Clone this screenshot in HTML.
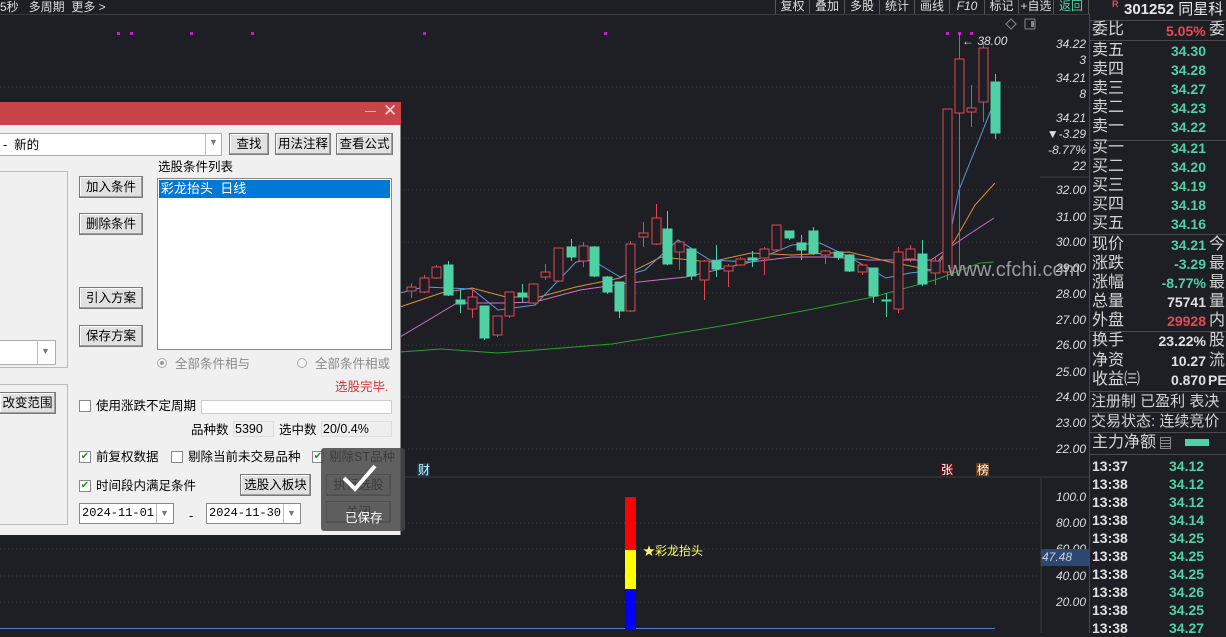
<!DOCTYPE html>
<html><head><meta charset="utf-8">
<style>
*{margin:0;padding:0;box-sizing:border-box}
body{width:1226px;height:633px;overflow:hidden;background:#1e1f24;font-family:"Liberation Sans","Noto Sans CJK SC",sans-serif;position:relative;color:#ccc}
.a{position:absolute;white-space:nowrap}
.tb{position:absolute;top:0;height:14px;font-size:12px;line-height:12px;color:#ddd;border-right:1px solid #555;text-align:center}
.rl{position:absolute;left:1092px;font-size:16px;line-height:18px;color:#d4d4d4;white-space:nowrap}
.rv{position:absolute;right:16px;font-size:14px;font-weight:bold;line-height:18px;text-align:right;white-space:nowrap}
.g{color:#4fd1a5}.r{color:#e84a55}.w{color:#e0e0e0}
.sep{position:absolute;left:1090px;width:136px;height:1px;background:#4a4a4a}
.ax{position:absolute;font-size:12px;font-style:italic;color:#ddd;text-align:right;width:46px;left:1040px}
.dlg{position:absolute;left:0;top:102px;width:401px;height:433px;background:#f0f0f0;border-right:1px solid #888;font-size:12px;color:#000}
.btn{position:absolute;background:#e1e1e1;border:1px solid #7a7a7a;box-shadow:inset -1px -1px 0 #a0a0a0,inset 1px 1px 0 #fff;text-align:center;font-size:12.5px;line-height:20px}
.box{position:absolute;border:1px solid #adadad;background:#fff}
.cb{position:absolute;width:12px;height:12px;border:1px solid #888;background:#fff;font-size:10px;line-height:10px;color:#2a8a2a;text-align:center}
.lab{position:absolute;font-size:12.5px;line-height:14px;white-space:nowrap}
</style></head><body>

<!-- top bar -->
<div class="a" style="left:0;top:-2px;font-size:12px;color:#ddd">5秒&nbsp;&nbsp;&nbsp;多周期&nbsp;&nbsp;更多 &gt;</div>
<div class="a" style="left:0;top:14px;width:1090px;height:1px;background:#3c3c3c"></div>
<div class="a" style="left:775px;top:0;width:1px;height:14px;background:#555"></div>
<div class="tb" style="left:776px;width:34px">复权</div>
<div class="tb" style="left:810px;width:35px">叠加</div>
<div class="tb" style="left:845px;width:35px">多股</div>
<div class="tb" style="left:880px;width:35px">统计</div>
<div class="tb" style="left:915px;width:35px">画线</div>
<div class="tb" style="left:950px;width:35px;font-style:italic">F10</div>
<div class="tb" style="left:985px;width:34px">标记</div>
<div class="tb" style="left:1019px;width:35px">+自选</div>
<div class="tb" style="left:1054px;width:35px;color:#4fd1a5">返回</div>

<svg class="a" style="left:0;top:0" width="1090" height="633">
<g stroke="#3a3c42" stroke-dasharray="1,3">
<line x1="0" y1="87" x2="1040" y2="87"/><line x1="0" y1="138" x2="1040" y2="138"/>
<line x1="0" y1="190" x2="1040" y2="190"/><line x1="0" y1="242" x2="1040" y2="242"/>
<line x1="0" y1="293" x2="1040" y2="293"/><line x1="0" y1="345" x2="1040" y2="345"/>
<line x1="0" y1="397" x2="1040" y2="397"/><line x1="0" y1="449" x2="1040" y2="449"/>
<line x1="0" y1="523" x2="1040" y2="523"/><line x1="0" y1="549" x2="1040" y2="549"/>
<line x1="0" y1="576" x2="1040" y2="576"/><line x1="0" y1="602" x2="1040" y2="602"/>
</g>
<line x1="0" y1="477" x2="1090" y2="477" stroke="#3a3c42"/>
<line x1="1041" y1="478" x2="1041" y2="633" stroke="#3a3c42"/>
<line x1="1040" y1="177" x2="1090" y2="177" stroke="#3a3c42"/>
<line x1="1089.5" y1="14" x2="1089.5" y2="633" stroke="#4a4a4a"/>
<g fill="#c020c0">
<rect x="117" y="32" width="3" height="3"/><rect x="130" y="32" width="3" height="3"/><rect x="190" y="32" width="3" height="3"/><rect x="251" y="32" width="3" height="3"/><rect x="423" y="32" width="3" height="3"/><rect x="604" y="32" width="3" height="3"/><rect x="946" y="32" width="3" height="3"/><rect x="958" y="32" width="3" height="3"/><rect x="970" y="32" width="3" height="3"/>
</g>
<path d="M1011 19 l5 5 -5 5 -5 -5z" fill="none" stroke="#888"/>
<rect x="1025" y="19" width="10" height="10" fill="none" stroke="#888" rx="1"/><rect x="1031" y="21" width="3" height="6" fill="#888"/>
<text x="962" y="45" fill="#ddd" font-size="12" font-style="italic" font-family="Liberation Sans">← 38.00</text>
<g fill="none" stroke-width="1">
<polyline stroke="#2aa02a" points="400,352 441,349 498,353 612,344 727,325 808,310 873,297 935,280 980,263 994,262"/>
<polyline stroke="#d070d0" points="400,337 457,303 506,303 535,302 580,290 629,283 686,277 751,262 792,257 829,257 869,260 931,260 971,233 994,218"/>
<polyline stroke="#e09030" points="400,307 441,293 472,288 506,297 539,297 576,287 620,278 661,257 710,262 751,253 792,255 849,252 890,262 931,270 955,240 975,205 995,183"/>
<polyline stroke="#5a9ae0" points="400,293 424,287 472,289 498,310 535,305 576,262 592,260 620,277 645,270 678,240 710,260 751,262 792,245 820,243 849,257 886,278 910,273 935,270 947,250 959,190 971,160 983,130 995,100"/>
</g>
<g id="c"></g>
<rect x="417" y="463" width="13" height="13" fill="#173a5e"/><text x="418" y="474" fill="#cfe" font-size="12">财</text>
<rect x="940" y="463" width="13" height="13" fill="#5a1010"/><text x="941" y="474" fill="#fff" font-size="12">张</text>
<rect x="976" y="463" width="13" height="13" fill="#6b3a12"/><text x="977" y="474" fill="#fff" font-size="12">榜</text>
<line x1="0" y1="628.5" x2="995" y2="628.5" stroke="#5a7ad0"/>
<rect x="625" y="497" width="11" height="53" fill="#f00"/>
<rect x="625" y="550" width="11" height="39" fill="#ff0"/>
<rect x="625" y="590" width="11" height="39" fill="#00f"/>
<text x="643" y="555" fill="#ffff60" font-size="12">★彩龙抬头</text>
<text x="948" y="276" fill="#9a9a9a" font-size="20" font-family="Liberation Sans">www.cfchi.com</text>
</svg>

<div class="ax" style="top:37px">34.22</div>
<div class="ax" style="top:53px">3</div>
<div class="ax" style="top:71px">34.21</div>
<div class="ax" style="top:87px">8</div>
<div class="ax g" style="top:111px">34.21</div>
<div class="ax g" style="top:127px;left:1034px;width:52px">▼-3.29</div>
<div class="ax g" style="top:143px">-8.77%</div>
<div class="ax g" style="top:159px">22</div>
<div class="ax" style="top:183px">32.00</div>
<div class="ax" style="top:210px">31.00</div>
<div class="ax" style="top:235px">30.00</div>
<div class="ax" style="top:261px">29.00</div>
<div class="ax" style="top:287px">28.00</div>
<div class="ax" style="top:313px">27.00</div>
<div class="ax" style="top:338px">26.00</div>
<div class="ax" style="top:365px">25.00</div>
<div class="ax" style="top:390px">24.00</div>
<div class="ax" style="top:416px">23.00</div>
<div class="ax" style="top:442px">22.00</div>
<div class="ax" style="top:490px">100.0</div>
<div class="ax" style="top:516px">80.00</div>
<div class="ax" style="top:542px">60.00</div>
<div class="ax" style="top:569px">40.00</div>
<div class="ax" style="top:595px">20.00</div>
<div class="a" style="left:1041px;top:549px;width:48px;height:17px;background:#2c4870;font-size:12px;font-style:italic;color:#ccd;line-height:17px;padding-left:1px">47.48</div>

<!-- right panel -->
<div class="a" style="left:1112px;top:-1px;font-size:9px;color:#e84a55;font-weight:bold">R</div>
<div class="a" style="left:1124px;top:-2px;font-size:15px;color:#e8e8e8;font-weight:bold">301252 <span style="font-weight:normal">同星科</span></div>
<div class="sep" style="top:20px"></div>
<div class="rl" style="top:21px">委比</div><div class="a r" style="left:1166px;top:22px;font-size:14px;font-weight:bold;line-height:18px">5.05%</div><div class="rl" style="left:1209px;top:21px">委</div>
<div class="sep" style="top:40px"></div>
<div class="rl" style="top:42px">卖五</div><div class="rv g" style="top:42px;right:20px">34.30</div>
<div class="rl" style="top:61px">卖四</div><div class="rv g" style="top:61px;right:20px">34.28</div>
<div class="rl" style="top:80px">卖三</div><div class="rv g" style="top:80px;right:20px">34.27</div>
<div class="rl" style="top:99px">卖二</div><div class="rv g" style="top:99px;right:20px">34.23</div>
<div class="rl" style="top:118px">卖一</div><div class="rv g" style="top:118px;right:20px">34.22</div>
<div class="sep" style="top:140px"></div>
<div class="rl" style="top:139px">买一</div><div class="rv g" style="top:139px;right:20px">34.21</div>
<div class="rl" style="top:158px">买二</div><div class="rv g" style="top:158px;right:20px">34.20</div>
<div class="rl" style="top:177px">买三</div><div class="rv g" style="top:177px;right:20px">34.19</div>
<div class="rl" style="top:196px">买四</div><div class="rv g" style="top:196px;right:20px">34.18</div>
<div class="rl" style="top:215px">买五</div><div class="rv g" style="top:215px;right:20px">34.16</div>
<div class="sep" style="top:234px"></div>
<div class="rl" style="top:236px">现价</div><div class="rv g" style="top:236px;right:20px">34.21</div><div class="rl" style="left:1209px;top:236px">今</div>
<div class="rl" style="top:255px">涨跌</div><div class="rv g" style="top:255px;right:20px">-3.29</div><div class="rl" style="left:1209px;top:255px">最</div>
<div class="rl" style="top:274px">涨幅</div><div class="rv g" style="top:274px;right:20px">-8.77%</div><div class="rl" style="left:1209px;top:274px">最</div>
<div class="rl" style="top:293px">总量</div><div class="rv w" style="top:293px;right:20px">75741</div><div class="rl" style="left:1209px;top:293px">量</div>
<div class="rl" style="top:312px">外盘</div><div class="rv r" style="top:312px;right:20px">29928</div><div class="rl" style="left:1209px;top:312px">内</div>
<div class="sep" style="top:331px"></div>
<div class="rl" style="top:332px">换手</div><div class="rv w" style="top:332px;right:20px">23.22%</div><div class="rl" style="left:1209px;top:332px">股</div>
<div class="rl" style="top:352px">净资</div><div class="rv w" style="top:352px;right:20px">10.27</div><div class="rl" style="left:1209px;top:352px">流</div>
<div class="rl" style="top:371px">收益㈢</div><div class="rv w" style="top:371px;right:20px">0.870</div><div class="a w" style="left:1208px;top:371px;font-size:14px;font-weight:bold;line-height:18px">PE</div>
<div class="sep" style="top:391px"></div>
<div class="rl" style="top:393px;left:1091px;font-size:15px">注册制 已盈利 表决</div>
<div class="sep" style="top:412px"></div>
<div class="rl" style="top:413px;left:1091px;font-size:15px">交易状态: 连续竞价</div>
<div class="sep" style="top:432px"></div>
<div class="rl" style="top:434px">主力净额</div>
<div class="a" style="left:1160px;top:437px;width:11px;height:12px;border:1px solid #888;background:repeating-linear-gradient(#1e1f24 0 2px,#888 2px 3px)"></div>
<div class="a" style="left:1185px;top:439px;width:24px;height:7px;background:#4fd1a5"></div>
<div class="sep" style="top:454px"></div>
<div id="ticks"></div>

<!-- dialog -->
<div class="a" style="left:0;top:102px;width:401px;height:23px;background:#c8444b"></div>
<div class="a" style="left:365px;top:111px;width:11px;height:1px;background:#f0c0c0"></div>
<div class="a" style="left:383px;top:101px;font-size:17px;color:#f4d0d0">✕</div>
<div class="dlg" style="top:125px;height:410px">
 <div class="box" style="left:-1px;top:8px;width:223px;height:23px"><span class="lab" style="left:3px;top:4px">-&nbsp;&nbsp;新的</span>
  <div class="a" style="left:205px;top:0;width:1px;height:21px;background:#bbb"></div><div class="a" style="left:209px;top:3px;font-size:9px;color:#777">▼</div></div>
 <div class="btn" style="left:229px;top:8px;width:40px;height:22px">查找</div>
 <div class="btn" style="left:275px;top:8px;width:56px;height:22px">用法注释</div>
 <div class="btn" style="left:336px;top:8px;width:57px;height:22px">查看公式</div>
 <div class="lab" style="left:158px;top:35px">选股条件列表</div>
 <div class="a" style="left:-1px;top:46px;width:69px;height:197px;border:1px solid #bbb"></div>
 <div class="box" style="left:-1px;top:215px;width:57px;height:25px"><div class="a" style="left:37px;top:0;width:1px;height:23px;background:#bbb"></div><div class="a" style="left:41px;top:5px;font-size:9px;color:#777">▼</div></div>
 <div class="btn" style="left:79px;top:51px;width:64px;height:22px">加入条件</div>
 <div class="btn" style="left:79px;top:88px;width:64px;height:22px">删除条件</div>
 <div class="btn" style="left:79px;top:162px;width:64px;height:22px">引入方案</div>
 <div class="btn" style="left:79px;top:200px;width:64px;height:22px">保存方案</div>
 <div class="box" style="left:157px;top:53px;width:235px;height:172px;border-color:#888">
  <div class="a" style="left:1px;top:1px;width:231px;height:18px;background:#0078d7;color:#fff;font-size:13px;line-height:18px;padding-left:2px">彩龙抬头&nbsp;&nbsp;日线</div></div>
 <div class="a" style="left:157px;top:233px;width:10px;height:10px;border:1px solid #aaa;border-radius:50%;background:#f4f4f4"><div class="a" style="left:2px;top:2px;width:4px;height:4px;border-radius:50%;background:#999"></div></div>
 <div class="lab" style="left:175px;top:232px;color:#8a8a8a">全部条件相与</div>
 <div class="a" style="left:297px;top:233px;width:10px;height:10px;border:1px solid #aaa;border-radius:50%;background:#f4f4f4"></div>
 <div class="lab" style="left:315px;top:232px;color:#8a8a8a">全部条件相或</div>
 <div class="lab" style="left:335px;top:255px;color:#e03030">选股完毕.</div>
 <div class="a" style="left:-1px;top:259px;width:69px;height:141px;border:1px solid #bbb"></div>
 <div class="btn" style="left:-1px;top:267px;width:57px;height:22px">改变范围</div>
 <div class="cb" style="left:79px;top:275px"></div><div class="lab" style="left:96px;top:274px">使用涨跌不定周期</div>
 <div class="box" style="left:201px;top:275px;width:191px;height:14px;border-color:#ccc"></div>
 <div class="lab" style="left:191px;top:298px">品种数</div>
 <div class="a" style="left:233px;top:296px;width:41px;height:16px;border:1px solid #ddd;background:#eee;font-size:12.5px;padding-left:1px">5390</div>
 <div class="lab" style="left:279px;top:298px">选中数</div>
 <div class="a" style="left:321px;top:296px;width:71px;height:16px;border:1px solid #ddd;background:#eee;font-size:12.5px;padding-left:1px">20/0.4%</div>
 <div class="cb" style="left:79px;top:326px">✔</div><div class="lab" style="left:96px;top:325px">前复权数据</div>
 <div class="cb" style="left:171px;top:326px"></div><div class="lab" style="left:188px;top:325px">剔除当前未交易品种</div>
 <div class="cb" style="left:312px;top:326px">✔</div><div class="lab" style="left:329px;top:325px">剔除ST品种</div>
 <div class="cb" style="left:79px;top:355px">✔</div><div class="lab" style="left:96px;top:354px">时间段内满足条件</div>
 <div class="btn" style="left:240px;top:349px;width:71px;height:22px">选股入板块</div>
 <div class="btn" style="left:326px;top:349px;width:65px;height:22px">执行选股</div>
 <div class="box" style="left:79px;top:378px;width:95px;height:21px;border-color:#888"><span class="a" style="left:2px;top:2px;font-family:'Liberation Mono',monospace;font-size:12px">2024-11-01</span><div class="a" style="left:76px;top:0;width:1px;height:19px;background:#bbb"></div><div class="a" style="left:80px;top:4px;font-size:9px;color:#777">▼</div></div>
 <div class="lab" style="left:189px;top:384px">-</div>
 <div class="box" style="left:206px;top:378px;width:95px;height:21px;border-color:#888"><span class="a" style="left:2px;top:2px;font-family:'Liberation Mono',monospace;font-size:12px">2024-11-30</span><div class="a" style="left:76px;top:0;width:1px;height:19px;background:#bbb"></div><div class="a" style="left:80px;top:4px;font-size:9px;color:#777">▼</div></div>
 <div class="btn" style="left:326px;top:376px;width:65px;height:22px">关闭</div>
</div>
<div class="a" style="left:321px;top:448px;width:84px;height:83px;background:rgba(70,70,70,0.85);border-radius:3px"></div>
<svg class="a" style="left:340px;top:460px" width="40" height="36"><path d="M4 18 L15 29 L35 6" fill="none" stroke="#fff" stroke-width="4"/></svg>
<div class="a" style="left:345px;top:507px;font-size:12.5px;color:#fff">已保存</div>

<script>
var C=[[411,287,291,283,298,1],[424,278,292,275,293,1],[436,267,278,265,279,1],[448,265,295,261,296,0],[460,300,304,290,313,0],[472,297,309,288,318,1],[484,306,338,306,340,0],[497,316,335,316,337,1],[509,292,316,292,318,1],[522,293,297,284,302,0],[533,284,303,283,304,1],[545,272,277,264,280,1],[558,248,281,248,282,1],[571,247,257,239,261,0],[583,246,261,242,267,1],[594,247,276,246,277,0],[607,277,292,276,294,0],[619,282,311,282,318,0],[630,244,311,241,312,1],[643,233,237,222,247,1],[656,218,244,204,245,1],[667,229,264,211,265,0],[679,242,252,240,270,1],[691,249,276,249,280,0],[704,261,280,260,300,1],[716,261,269,245,277,0],[728,266,271,264,287,1],[740,259,265,257,266,1],[752,258,260,251,267,0],[764,249,258,247,275,1],[776,225,250,225,251,1],[789,231,238,231,240,0],[801,243,250,235,260,0],[813,231,253,227,255,0],[825,251,255,250,264,1],[838,252,257,251,260,0],[849,255,271,254,272,0],[862,265,272,264,275,1],[873,268,296,268,303,0],[886,300,301,293,317,0],[898,252,309,247,313,1],[910,249,259,245,262,1],[922,254,284,240,286,0],[935,261,273,257,285,1],[947,109,272,109,280,1],[959,59,113,33,270,1],[971,108,112,85,127,1],[983,48,102,42,122,1],[995,82,133,74,139,0]];
var s='';C.forEach(function(c){var col=c[5]?'#e0474f':'#4fd1a5';s+='<line x1="'+(c[0]+.5)+'" y1="'+c[3]+'" x2="'+(c[0]+.5)+'" y2="'+c[4]+'" stroke="'+col+'"/>';s+='<rect x="'+(c[0]-4)+'" y="'+c[1]+'" width="9" height="'+Math.max(1,c[2]-c[1])+'" fill="'+(c[5]?'#1e1f24':col)+'" stroke="'+col+'"/>';});
document.getElementById('c').innerHTML=s;
var T=[['13:37','34.12'],['13:38','34.12'],['13:38','34.12'],['13:38','34.14'],['13:38','34.25'],['13:38','34.25'],['13:38','34.25'],['13:38','34.26'],['13:38','34.25'],['13:38','34.27']];
var h='';T.forEach(function(t,i){var y=457+i*18;h+='<div class="a w" style="left:1092px;top:'+y+'px;font-size:14px;font-weight:bold;line-height:18px">'+t[0]+'</div><div class="a g" style="left:1169px;top:'+y+'px;font-size:14px;font-weight:bold;line-height:18px">'+t[1]+'</div>';});
document.getElementById('ticks').innerHTML=h;
</script>
</body></html>
